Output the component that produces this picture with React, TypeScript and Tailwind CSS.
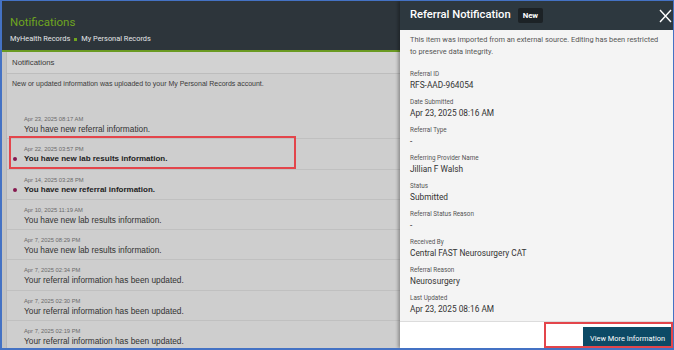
import React from "react";

const items = [
  { date: "Apr 23, 2025 08:17 AM", text: "You have new referral information.", bold: false },
  { date: "Apr 22, 2025 03:57 PM", text: "You have new lab results information.", bold: true },
  { date: "Apr 14, 2025 03:28 PM", text: "You have new referral information.", bold: true },
  { date: "Apr 10, 2025 11:19 AM", text: "You have new lab results information.", bold: false },
  { date: "Apr 7, 2025 08:29 PM", text: "You have new lab results information.", bold: false },
  { date: "Apr 7, 2025 02:34 PM", text: "Your referral information has been updated.", bold: false },
  { date: "Apr 7, 2025 02:30 PM", text: "Your referral information has been updated.", bold: false },
  { date: "Apr 7, 2025 02:19 PM", text: "Your referral information has been updated.", bold: false },
];

const fields = [
  ["Referral ID", "RFS-AAD-964054"],
  ["Date Submitted", "Apr 23, 2025 08:16 AM"],
  ["Referral Type", "-"],
  ["Referring Provider Name", "Jillian F Walsh"],
  ["Status", "Submitted"],
  ["Referral Status Reason", "-"],
  ["Received By", "Central FAST Neurosurgery CAT"],
  ["Referral Reason", "Neurosurgery"],
  ["Last Updated", "Apr 23, 2025 08:16 AM"],
];

export default function App() {
  return (
    <div className="w-[674px] h-[350px] overflow-hidden bg-white">
      <div className="relative w-full h-full border-t border-r border-b-2 border-l-2 border-[#4472c4] flex overflow-hidden">
        {/* Left page */}
        <div className="w-[398px] shrink-0 flex flex-col font-['Liberation_Sans',Arial,sans-serif]">
          <div className="h-[49px] shrink-0 bg-[#2d353b] pl-[8px] flex flex-col">
            <div className="mt-[13px] h-[16px] leading-[16px] text-[11.5px] text-[#6fa51f] font-['Roboto',sans-serif]">
              Notifications
            </div>
            <div className="mt-[3px] h-[12px] leading-[12px] text-[7.4px] text-[#e4e6e8] flex items-center font-['Roboto',sans-serif]">
              <span>MyHealth Records</span>
              <span className="mx-[4px] w-[3px] h-[3px] bg-[#6fa51f]" />
              <span>My Personal Records</span>
            </div>
          </div>
          <div className="h-[2px] shrink-0 bg-[#6a9a22]" />
          <div className="flex-1 bg-[#c3c3c3] pl-[4px]">
            <div className="h-full bg-[#cecece] border-l border-[#b9b9b9] flex flex-col">
              <div className="h-[22px] shrink-0 bg-[#d2d2d2] border-b border-[#bdbdbd] pl-[5px] flex items-center text-[7.8px] text-[#3a3a3a]">
                Notifications
              </div>
              <div className="h-[35px] shrink-0 pl-[5px] pt-[5px] text-[7px] leading-[9px] text-[#3a3a3a]">
                New or updated information was uploaded to your My Personal Records account.
              </div>
              <div className="flex flex-col">
                {items.map((it, i) => (
                  <div
                    key={i}
                    className="relative h-[30.3px] shrink-0 border-b border-[#c0c0c0] pl-[17px] pt-[6px]"
                  >
                    {it.bold && (
                      <span className="absolute left-[6px] top-[18px] w-[4px] h-[4px] rounded-full bg-[#86184f]" />
                    )}
                    <div className="h-[8px] leading-[8px] text-[5.8px] text-[#6a6a6a]">{it.date}</div>
                    <div
                      className={
                        "h-[12px] leading-[12px] " +
                        (it.bold ? "text-[8px] font-bold text-[#222]" : "text-[8.3px] text-[#333]")
                      }
                    >
                      {it.text}
                    </div>
                  </div>
                ))}
              </div>
            </div>
          </div>
        </div>

        {/* Drawer */}
        <div className="flex-1 flex flex-col shadow-[-2px_0_3px_rgba(0,0,0,0.3)] z-10 font-['Roboto',sans-serif]">
          <div className="h-[29px] shrink-0 bg-[#2d383f] pl-[10px] pr-[1px] flex items-center">
            <span className="text-[11.2px] text-white font-medium">Referral Notification</span>
            <span className="ml-[7px] h-[15px] px-[5px] rounded-[2px] bg-[#1c2226] text-white text-[7.8px] font-bold flex items-center">
              New
            </span>
            <span className="ml-auto w-[13px] h-[14px] flex items-center justify-center">
              <svg width="13" height="14" viewBox="0 0 13 14">
                <path d="M1 1 L12 13 M12 1 L1 13" stroke="white" strokeWidth="1.4" fill="none" />
              </svg>
            </span>
          </div>
          <div className="flex-1 bg-[#f4f4f4] border-b border-[#dcdcdc] pl-[10px] pr-[8px] pt-[4px]">
            <p className="text-[7.4px] leading-[11.5px] text-[#555]">
              This item was imported from an external source. Editing has been restricted to preserve data integrity.
            </p>
            <div className="mt-[12px] flex flex-col">
              {fields.map(([l, v]) => (
                <div key={l} className="h-[28px] shrink-0">
                  <div className="h-[10px] leading-[10px] text-[6.3px] text-[#555]">{l}</div>
                  <div className="h-[12px] leading-[12px] text-[8.3px] text-[#333]">{v}</div>
                </div>
              ))}
            </div>
          </div>
          <div className="h-[27px] shrink-0 bg-white flex justify-end items-start pt-[5px] pr-[1px]">
            <button className="w-[89px] h-[24px] bg-[#0c4a66] text-white text-[7.4px] flex items-center justify-center font-['Roboto',sans-serif]">
              View More Information
            </button>
          </div>
        </div>

        {/* Annotation highlights */}
        <div className="absolute left-[7px] top-[135px] w-[287px] h-[33px] border-2 border-[#e3454b]" />
        <div className="absolute right-0 bottom-0 w-[129px] h-[26px] border-2 border-[#e3454b] z-20" />
      </div>
    </div>
  );
}
